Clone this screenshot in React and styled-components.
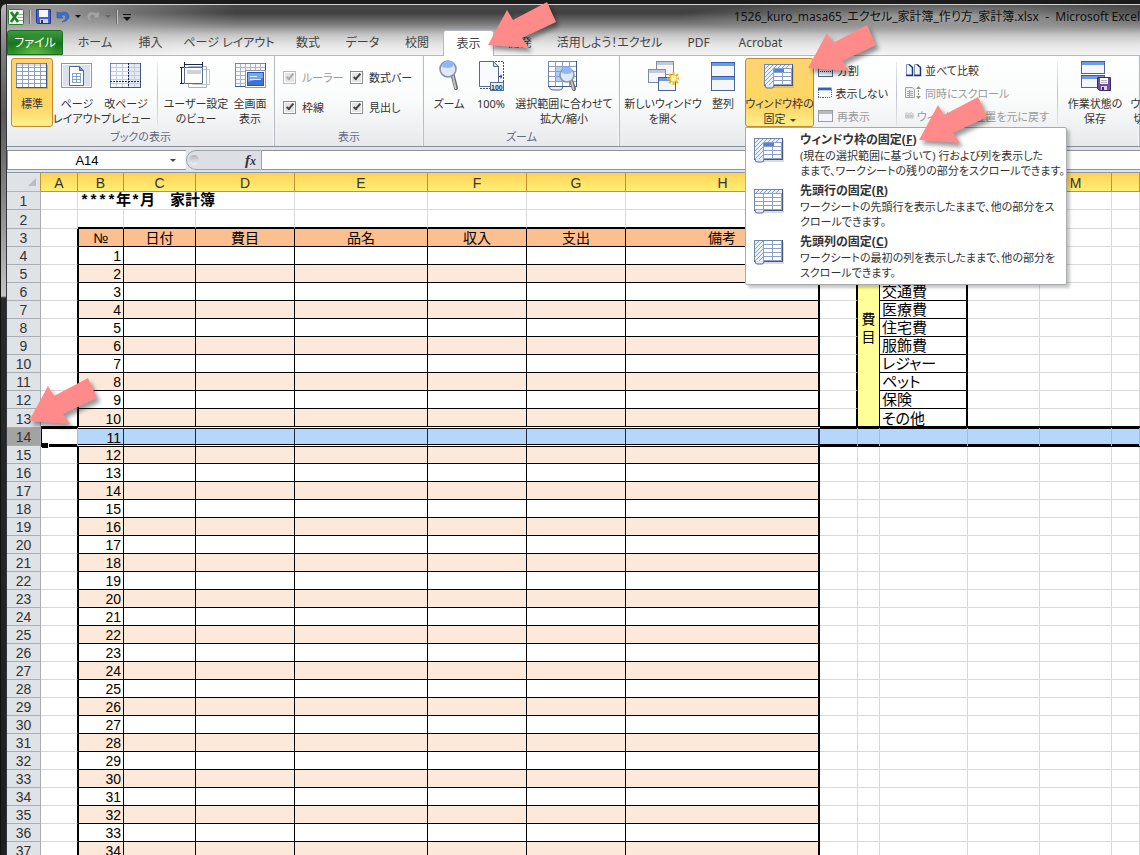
import React, { useState } from 'react';
import styled, { createGlobalStyle, css } from 'styled-components';

const GlobalStyle = createGlobalStyle`
  *, *::before, *::after {
    box-sizing: border-box;
  }
  body {
    margin: 0;
    font-family: 'Noto Sans', 'Noto Sans CJK JP', sans-serif;
    font-size: 12px;
    color: #333;
  }
  button, input {
    font: inherit;
    color: inherit;
  }
`;

/* ---------- window frame ---------- */

const Window = styled.div`
  position: relative;
  height: 100vh;
  display: flex;
  overflow: hidden;
  background: #1b1b1b;
  padding-top: 4px;
`;

const Frame = styled.div`
  flex: 0 0 7px;
  border-left: 1px solid #111;
  border-right: 1px solid #33373b;
  border-top-left-radius: 6px;
  background: linear-gradient(#b8b8b8 0, #7c7c7c 50px, #5a5a5a 110px, #8a8a8a 200px, #c4c4c4 292px, #262a2c 294px, #1d2022 100%);
`;

const Main = styled.div`
  flex: 1;
  min-width: 0;
  display: flex;
  flex-direction: column;
  border-top: 1px solid #d4d4d4;
  background: #fff;
`;

const Chrome = styled.header`
  flex: none;
  background:
    radial-gradient(ellipse 260px 16px at 930px 12px, rgba(190, 190, 190, 0.75), transparent),
    radial-gradient(ellipse 190px 60px at 40px 8px, rgba(200, 200, 200, 0.65), transparent),
    linear-gradient(#484848, #404040 8px, #7a7a7a 19px, #c6c6c6 30px, #e6e6e6 40px, #f4f4f4);
`;

const TitleBar = styled.div`
  display: flex;
  align-items: center;
  height: 23px;
  padding-left: 1px;
  color: #111;
`;

const QuickTools = styled.div`
  display: flex;
  align-items: center;
  gap: 5px;
`;

const QuickButton = styled.button`
  display: flex;
  padding: 0;
  border: 0;
  background: none;
`;

const Divider = styled.span`
  width: 2px;
  height: 14px;
  background: #6b6b6b;
  border-right: 1px solid #c4c4c4;
`;

const Title = styled.h1`
  margin: 0 0 0 auto;
  font-size: 12px;
  font-weight: 400;
  line-height: 20px;
  white-space: pre;
  font-feature-settings: 'palt';
`;

const Tabs = styled.nav`
  display: flex;
  align-items: flex-end;
  height: 27px;
  font-feature-settings: 'palt';
`;

const Tab = styled.button`
  width: ${(p) => p.$w}px;
  height: 25px;
  padding: 0;
  border: 1px solid transparent;
  border-bottom: 0;
  background: none;
  line-height: 24px;
  white-space: nowrap;
  color: #444;

  ${(p) => p.$active && css`
    position: relative;
    height: 26px;
    margin-bottom: -1px;
    background: #fff;
    border-color: #b4b8bd;
    border-radius: 3px 3px 0 0;
  `}
`;

const FileTab = styled(Tab)`
  margin-right: 2px;
  color: #fff;
  border: 1px solid #1e6b22;
  border-radius: 3px 3px 0 0;
  background: radial-gradient(ellipse at 50% 110%, #62c044, transparent 60%), linear-gradient(#3c9a3c, #17741d 55%, #2f962c);
`;

/* ---------- ribbon ---------- */

const Ribbon = styled.div`
  display: flex;
  flex: none;
  height: 92px;
  border-top: 1px solid #b4b8bd;
  border-bottom: 1px solid #8b9097;
  background: linear-gradient(#fff, #fafbfb 50%, #e7e9ec);
  font-size: 11px;
  font-feature-settings: 'palt';
`;

const Group = styled.section`
  flex: ${(p) => (p.$w ? `0 0 ${p.$w}px` : '1 0 0')};
  min-width: 0;
  display: flex;
  flex-direction: column;
  border-right: 1px solid #b9bdc3;
  box-shadow: inset -1px 0 #f6f7f8;
  padding-top: 2px;
`;

const GroupBody = styled.div`
  height: 69px;
  display: flex;
  gap: ${(p) => p.$gap}px;
  padding-left: ${(p) => p.$pad}px;
`;

const GroupLabel = styled.h2`
  margin: 0;
  font-size: 11px;
  font-weight: 400;
  line-height: 19px;
  text-align: center;
  color: #666a80;
`;

const Separator = styled.span`
  flex: 0 0 1px;
  margin: 4px 4px 2px;
  background: linear-gradient(#e8eaec, #bfc3c8 50%, #e2e4e7);
`;

const BigButton = styled.button`
  flex: 0 0 ${(p) => p.$w}px;
  min-width: 0;
  height: 69px;
  display: flex;
  flex-direction: column;
  align-items: center;
  padding: 1px 0 0;
  border: 1px solid transparent;
  border-radius: 3px;
  background: none;
  line-height: 15px;
  text-align: center;
  white-space: nowrap;

  svg {
    flex: none;
    margin-bottom: 4px;
  }

  ${(p) => p.$active && css`
    border-color: #c28a30;
    background: linear-gradient(#fdd374, #ffd666 45%, #ffd565 70%, #fff08a);
  `}
`;

const Caret = styled.span`
  display: inline-block;
  margin-left: ${(p) => (p.$flush ? 0 : 4)}px;
  vertical-align: middle;
  border: 3px solid transparent;
  border-top-color: ${(p) => p.$color || '#444'};
  border-bottom: 0;
`;

const SmallColumn = styled.div`
  flex: 0 0 ${(p) => p.$w}px;
  min-width: 0;
  display: flex;
  flex-direction: column;
`;

const SmallButton = styled.button`
  display: flex;
  align-items: center;
  gap: 3px;
  height: 23px;
  padding: 0;
  border: 0;
  background: none;
  white-space: nowrap;
  color: #333;

  &:disabled {
    color: #9a9a9a;
  }
`;

const CheckGrid = styled.div`
  display: grid;
  grid-template-columns: 67px 1fr;
  grid-auto-rows: 30px;
  align-items: center;
  height: 69px;
  padding: 4px 0 0 8px;
`;

const CheckLabel = styled.label`
  display: flex;
  align-items: center;
  gap: 6px;
  white-space: nowrap;
  color: ${(p) => (p.$off ? '#9a9a9a' : '#333')};
`;

const CheckBox = styled.input`
  appearance: none;
  width: 13px;
  height: 13px;
  margin: 0;
  border: 1px solid #8c8c8c;
  outline: 1px solid #fff;
  outline-offset: -2px;
  background: #e4e4e4;
  display: grid;
  place-items: center;

  &:checked::before {
    content: '';
    width: 4px;
    height: 8px;
    margin-bottom: 2px;
    border: solid #444;
    border-width: 0 2px 2px 0;
    rotate: 40deg;
  }
  &:disabled {
    border-color: #bbb;
  }
  &:disabled::before {
    border-color: #aaa;
  }
`;

/* ---------- freeze panes menu ---------- */

const MenuAnchor = styled.div`
  position: relative;
  flex: 0 0 69px;
  min-width: 0;
  display: flex;
`;

const Menu = styled.ul`
  position: absolute;
  z-index: 3;
  left: 0;
  top: 69px;
  width: 322px;
  margin: 0;
  padding: 2px 0 1px;
  list-style: none;
  background: #fff;
  border: 1px solid #a7abb0;
  border-radius: 0 2px 2px 2px;
  box-shadow: 3px 3px 3px rgba(0, 0, 0, 0.22);
`;

const MenuItem = styled.button`
  display: grid;
  grid-template-columns: 46px 1fr;
  align-items: start;
  width: 100%;
  height: 51px;
  padding: 1px 0 0 8px;
  border: 0;
  background: none;
  text-align: left;
  line-height: 15px;
  white-space: nowrap;

  svg {
    margin-top: 6px;
  }
`;

const MenuTitle = styled.strong`
  display: block;
  font-size: 12px;
  line-height: 17px;
`;

const MenuText = styled.span`
  font-size: 11px;
`;

/* ---------- formula bar ---------- */

const FormulaBar = styled.div`
  display: flex;
  flex: 0 0 26px;
  padding: 3px 0 2px;
  background: #dfe3ea;
  border-bottom: 1px solid #9097a0;
`;

const NameBox = styled.div`
  flex: 0 0 179px;
  display: flex;
  align-items: center;
  background: #fff;
  border: 1px solid #8f949b;
  border-right: 0;

  input {
    width: 158px;
    height: 17px;
    padding: 0;
    border: 0;
    background: none;
    text-align: center;
    font-family: 'Liberation Sans', sans-serif;
    font-size: 13px;
    color: #000;
  }
`;

const FxArea = styled.div`
  flex: 0 0 76px;
  display: flex;
  align-items: center;
  justify-content: space-between;
  padding: 0 5px 0 2px;
  border: 1px solid #9da2a9;
  border-radius: 10px 0 0 10px;
  background: #dcdfe4;
`;

const Knob = styled.span`
  width: 10px;
  height: 10px;
  border-radius: 50%;
  background: linear-gradient(#b0b3b8, #f4f4f4);
`;

const FxButton = styled.button`
  padding: 0;
  border: 0;
  background: none;
  font-family: 'Liberation Serif', serif;
  font-size: 15px;
  font-weight: 700;
  font-style: italic;
  line-height: 16px;

  small {
    font-size: 12px;
  }
`;

const FormulaInput = styled.input`
  flex: 1;
  min-width: 0;
  padding: 0 4px;
  border: 1px solid #8f949b;
  border-width: 1px 0;
  background: #fff;
`;

/* ---------- sheet ---------- */

const Sheet = styled.table`
  table-layout: fixed;
  width: 100%;
  border-collapse: separate;
  border-spacing: 0;
  font-family: 'Liberation Sans', 'Noto Sans CJK JP', sans-serif;
  font-size: 14px;
  line-height: 16px;
  color: #000;
`;

const ColHead = styled.th`
  height: 19px;
  padding: 2px 0 0;
  font-weight: 400;
  color: #333;
  background: linear-gradient(#ffd25a, #fff072);
  border-right: 1px solid #c98f35;
  border-bottom: 1px solid #c98f35;
`;

const Corner = styled.th`
  padding: 0 4px 0 0;
  background: #dfe3e8;
  border-right: 1px solid #c98f35;
  border-bottom: 1px solid #b0b5bc;

  &::after {
    content: '';
    display: block;
    width: 0;
    margin-left: auto;
    border: 4px solid #b9bdc2;
    border-top-color: transparent;
    border-left-color: transparent;
  }
`;

const RowHead = styled.th`
  height: ${(p) => p.$h}px;
  padding: 1px 0 0;
  font-weight: 400;
  color: #333;
  background: ${(p) => (p.$active ? '#a3a3a3' : '#dfe3e8')};
  border-right: 1px solid #a9adb3;
  border-bottom: 1px solid #a9adb3;
`;

const Cell = styled.td`
  padding: 1px 2px 0;
  white-space: nowrap;
  text-align: ${(p) => p.$align || 'left'};
  background: ${(p) => p.$fill || 'transparent'};
  border-style: solid;
  border-color: ${(p) => (p.$right ? '#000' : '#d9d9d9')} ${(p) => (p.$right ? '#000' : '#d9d9d9')} ${(p) => (p.$bottom ? '#000' : '#d9d9d9')} #000;
  border-width: 0 ${(p) => p.$right || 1}px ${(p) => p.$bottom || 1}px ${(p) => p.$left || 0}px;
`;

const TitleCell = styled(Cell)`
  padding-top: 2px;
  line-height: 15px;
  font-family: 'Liberation Mono', 'Noto Sans CJK JP', monospace;
  font-size: 15px;
  font-weight: 700;
`;

const KanaCell = styled(Cell)`
  font-size: 15px;
  font-feature-settings: 'palt';
`;

const VerticalCell = styled(Cell)`
  padding: 0;
  line-height: 18px;
`;

const SelectedCell = styled(Cell)`
  position: relative;
  box-shadow:
    inset 0 -1px ${(p) => p.$line},
    inset 0 -2px #000,
    0 1px #000,
    0 -1px ${(p) => p.$line},
    0 -2px #000,
    inset 0 1px #000;
  border-right-color: ${(p) => (p.$right ? '#1d2740' : '#9fbddd')};
  border-bottom: 0;
`;

const FillHandle = styled.span`
  position: absolute;
  left: 0;
  bottom: -2px;
  width: 7px;
  height: 6px;
  background: #000;
  border: solid #fff;
  border-width: 1px 1px 0 0;
`;

const Arrow = styled.svg`
  position: absolute;
  z-index: 5;
  left: ${(p) => p.$x}px;
  top: ${(p) => p.$y}px;
  overflow: visible;
  pointer-events: none;
  filter: drop-shadow(3px 4px 2px rgba(0, 0, 0, 0.4));
`;

/* ---------- icons ---------- */

const lines = (from, to, step) => {
  const out = [];
  for (let v = from; v <= to; v += step) out.push(v);
  return out;
};

const GridLines = ({ x, y, w, h, dx, dy, stroke = '#8aa0c4' }) => (
  <g fill="none" stroke={stroke} shapeRendering="crispEdges">
    {lines(x + dx, x + w - 2, dx).map((v) => <path key={`v${v}`} d={`M${v + 0.5} ${y}v${h}`} />)}
    {lines(y + dy, y + h - 2, dy).map((v) => <path key={`h${v}`} d={`M${x} ${v + 0.5}h${w}`} />)}
    <rect x={x + 0.5} y={y + 0.5} width={w - 1} height={h - 1} stroke="#6f86ad" />
    <path d={`M${x} ${y + h - 0.5}h${w - 0.5}V${y}`} stroke="#44597f" />
  </g>
);

const Icon = ({ children, size = 32, h }) => (
  <svg width={size} height={h || size} viewBox={`0 0 ${size} ${h || size}`} aria-hidden="true">{children}</svg>
);

const NormalIcon = () => (
  <Icon>
    <rect x="1" y="5" width="31" height="24" fill="#7a6a40" opacity=".35" />
    <rect x="0" y="3" width="31" height="25" fill="#fff" />
    <rect x="0" y="3" width="31" height="3" fill="#d5e1f3" />
    <GridLines x={0} y={3} w={31} h={25} dx={6} dy={4} />
  </Icon>
);

const PageLayoutIcon = () => (
  <Icon>
    <rect x=".5" y="3.5" width="30" height="24" fill="#d9e1ee" stroke="#8898b4" />
    <rect x="1.5" y="4.5" width="28" height="22" fill="none" stroke="#f5f8fc" />
    <path d="M8.500 6.500h10l4 4v15h-14z" fill="#fff" stroke="#54698f" />
    <path d="M18.500 6.500v4h4z" fill="#8497b8" stroke="#54698f" />
    <path d="M11 13.500h9M11 16.500h9M11 19.500h9M11 22.500h9M11.500 13v10M15.500 13v10M19.500 13v10" stroke="#8aa0c4" shapeRendering="crispEdges" />
  </Icon>
);

const PageBreakIcon = () => (
  <Icon>
    <rect x="0" y="3" width="31" height="25" fill="#f7f9fc" />
    <rect x="19" y="3" width="12" height="25" fill="#e4e9f0" />
    <GridLines x={0} y={3} w={31} h={25} dx={6} dy={4} stroke="#c3cde0" />
    <path d="M18.500 3v25M0 21.500h31" stroke="#1c2e50" strokeDasharray="2 1" shapeRendering="crispEdges" />
  </Icon>
);

const CustomViewIcon = () => (
  <Icon>
    <path d="M12.500 9.500h17v15h-17z" fill="#fff" stroke="#c3c9d3" />
    <path d="M8.500 6.500h18v21h-18z" fill="none" stroke="#a9b2c1" />
    <path d="M4.500 7.500h18v16h-18z" fill="#fff" stroke="#5a6a8a" />
    <rect x="7" y="10" width="14" height="4" fill="#cdd3de" />
    <path d="M4.500 2v5M22.500 2v5M4 4.500h19M0 7.500h4M0 23.500h4M1.500 8v15" stroke="#16274d" shapeRendering="crispEdges" />
  </Icon>
);

const FullScreenIcon = () => (
  <Icon>
    <rect x="1" y="3" width="31" height="24" fill="#f7f9fc" />
    <GridLines x={1} y={3} w={31} h={24} dx={5} dy={4} stroke="#a9b7d0" />
    <rect x="11.500" y="10.500" width="20" height="17" fill="#fff" stroke="#8a9ab8" />
    <rect x="13.500" y="12.500" width="16" height="13" fill="#3b74d6" stroke="#2b57a8" />
    <path d="M14 13h15v5l-15 4z" fill="#7ba5ea" />
    <path d="M16 16.500h7M16 19.500h11" stroke="#e6effc" />
  </Icon>
);

const Lens = ({ cx, cy, r, hx, hy }) => (
  <g>
    <path d={`M${cx + r * 0.6} ${cy + r * 0.8}L${hx} ${hy}`} stroke="#666" strokeWidth="4" strokeLinecap="round" />
    <path d={`M${cx + r * 0.6} ${cy + r * 0.8}L${hx - 0.5} ${hy}`} stroke="#c4c4c4" strokeWidth="2" strokeLinecap="round" />
    <circle cx={cx} cy={cy} r={r} fill="#dbe9fb" stroke="#8a94a6" strokeWidth="1.600" />
    <path d={`M${cx - r + 2} ${cy - 2}a${r - 1.5} ${r - 1.500} 0 0 1 ${r * 1.5} ${-r * 0.4}q-1 ${r * 0.8} ${-r * 1.500} ${r * 0.4}z`} fill="#8fb8f2" />
  </g>
);

const ZoomIcon = () => (
  <Icon><Lens cx={15} cy={9} r={8} hx={23} hy={28} /></Icon>
);

const Zoom100Icon = () => (
  <Icon>
    <path d="M20 1.500h8.500v27H4" fill="none" stroke="#3c4f78" strokeDasharray="2 1" shapeRendering="crispEdges" />
    <path d="M4.500 1.500h14l5 5v20h-19z" fill="#f8fafd" stroke="#54698f" />
    <path d="M18.500 1.500v5h5z" fill="#d6dfee" stroke="#54698f" />
    <path d="M24 16.500h3M26 14.500v4" stroke="#26375c" />
    <rect x="15.500" y="22.500" width="13" height="8" fill="#e8eef7" stroke="#54698f" />
    <text x="16" y="29.500" fontSize="7" fontWeight="700" fontFamily="Liberation Sans, sans-serif" fill="#1c2e50">100</text>
  </Icon>
);

const ZoomFitIcon = () => (
  <Icon>
    <rect x="0" y="1" width="29" height="26" fill="#fff" />
    <rect x="7" y="6" width="14" height="15" fill="#b4cdf3" />
    <GridLines x={0} y={1} w={29} h={26} dx={7} dy={5} />
    <path d="M1 27q1 3 4 3h7q2 0 3-3" fill="#eef2f8" stroke="#54698f" />
    <Lens cx={19} cy={15} r={7} hx={26} hy={29} />
  </Icon>
);

const Win = ({ x, y, w, h, bar = '#6f9ae6', stroke = '#4f6490' }) => (
  <g shapeRendering="crispEdges">
    <rect x={x + 0.5} y={y + 0.5} width={w - 1} height={h - 1} fill="#f3f6fb" stroke={stroke} />
    <rect x={x + 1} y={y + 1} width={w - 2} height="3" fill={bar} />
    <path d={`M${x} ${y + 0.5}h${w}`} stroke={bar === '#6f9ae6' ? '#2f5db5' : stroke} />
  </g>
);

const NewWindowIcon = () => (
  <Icon>
    <Win x={9} y={1} w={18} h={14} bar="#c3cad6" stroke="#7e8ba3" />
    <Win x={1} y={9} w={18} h={14} bar="#c3cad6" stroke="#7e8ba3" />
    <Win x={11} y={17} w={18} h={14} />
    <path d="M26.500 12v13M20 18.500h13M22 14l9 9M31 14l-9 9" stroke="#f2b418" strokeWidth="2" />
    <circle cx="26.500" cy="18.500" r="3" fill="#fff4a3" />
  </Icon>
);

const ArrangeIcon = () => (
  <Icon>
    <Win x={4} y={2} w={24} h={15} />
    <Win x={4} y={16} w={24} h={15} />
  </Icon>
);

const Hatch = ({ x, y, w, h }) => (
  <g>
    <rect x={x} y={y} width={w} height={h} fill="#eaf1fd" />
    {lines(0, w + h - 4, 4).map((d) => {
      const x1 = x + Math.min(d, w);
      const y1 = y + Math.max(0, d - w);
      const x2 = x + Math.max(0, d - h);
      const y2 = y + Math.min(d, h);
      return <path key={d} d={`M${x1} ${y1}L${x2} ${y2}`} stroke="#7ea2de" />;
    })}
  </g>
);

const FreezeIcon = ({ mode = 'both' }) => (
  <Icon size={30} h={27}>
    <rect x="2" y="3" width="28" height="22" fill="#8a8a8a" opacity=".3" />
    <rect x="0" y="1" width="29" height="22" fill="#fff" />
    <GridLines x={0} y={1} w={29} h={22} dx={9} dy={4} />
    {mode !== 'col' && <Hatch x={1} y={2} w={27} h={3} />}
    {mode !== 'row' && <Hatch x={1} y={2} w={8} h={20} />}
    {mode === 'both' && <rect x="10" y="6" width="10" height="3" fill="#4f83dc" />}
    <path d="M1 22q0 3 2 3h5q2 0 2-3" fill="#dfe8f7" stroke="#54698f" />
  </Icon>
);

const SplitIcon = () => (
  <Icon size={16}>
    <Win x={0} y={1} w={15} h={14} />
    <path d="M2 9.500h12" stroke="#26375c" strokeDasharray="1 1" />
  </Icon>
);

const HideIcon = () => (
  <Icon size={16}>
    <rect x="0" y="2" width="15" height="3" fill="#2f62c0" />
    <path d="M.5 5v8.500h14V5" fill="none" stroke="#3f4a60" strokeDasharray="1 1" shapeRendering="crispEdges" />
  </Icon>
);

const UnhideIcon = () => (
  <Icon size={16}>
    <Win x={0} y={2} w={15} h={12} bar="#b9b9b9" stroke="#9d9d9d" />
  </Icon>
);

const SideBySideIcon = () => (
  <Icon size={17}>
    <path d="M1.500 3.500h3l3 2.500v8h-6zM9.500 3.500h3l3 2.500v8h-6z" fill="#f3f7fd" stroke="#7f95ba" />
    <path d="M4 3.500l3.500 3v8H1M12 3.500l3.500 3v8H9" fill="none" stroke="#1f3766" strokeWidth="1.500" />
  </Icon>
);

const SyncIcon = () => (
  <Icon size={17}>
    <path d="M.5 3.500h7l2 2v8H.5z" fill="#eee" stroke="#a0a0a0" />
    <path d="M2 7.500h6M2 9.500h6M2 11.500h6M4.500 6v7" stroke="#a8a8a8" />
    <path d="M13.500 3v11" stroke="#8f8f8f" strokeDasharray="2 1" />
    <path d="M11 5l2.500-3L16 5zM11 12l2.500 3 2.500-3z" fill="#8f8f8f" />
  </Icon>
);

const ResetIcon = () => (
  <Icon size={17}>
    <path d="M1.500 3.500h4l2 2v8h-6zM9.500 3.500h4l2 2v8h-6z" fill="#eee" stroke="#a0a0a0" />
    <path d="M1 9.500h5M4 7l2.500 2.500L4 12M16 9.500h-5M13 7l-2.500 2.500L13 12" fill="none" stroke="#8c8c8c" />
  </Icon>
);

const SaveStateIcon = () => (
  <Icon>
    <Win x={2} y={1} w={24} h={13} />
    <Win x={2} y={15} w={24} h={13} />
    <path d="M18.500 17.500h13v13h-11l-2-2z" fill="#6c4f9e" stroke="#3f2a6b" />
    <rect x="21" y="18" width="8" height="6" fill="#fff" />
    <path d="M22 20.500h6M22 22.500h6" stroke="#b9b0cc" />
    <rect x="22" y="26" width="6" height="4" fill="#d8d0e8" />
    <rect x="23" y="27" width="2" height="3" fill="#3f2a6b" />
  </Icon>
);

const ExcelIcon = () => (
  <Icon size={16}>
    <rect x=".5" y=".5" width="15" height="15" rx="1" fill="#e9f5e6" stroke="#2f7d32" />
    <rect x="10" y="2" width="5" height="12" fill="#fff" />
    <path d="M10 5.500h5M10 8.500h5M10 11.500h5" stroke="#7bb87b" />
    <path d="M3 3l7 10M10 3L3 13" stroke="#1f7a2a" strokeWidth="2.600" />
  </Icon>
);

const DiskIcon = () => (
  <Icon size={15}>
    <path d="M.5.5h14v14h-13l-1-1z" fill="#4a5fc8" stroke="#26338a" />
    <rect x="3" y="1" width="9" height="7" fill="#f3f6fd" />
    <rect x="4" y="10" width="8" height="4" fill="#c9d2ee" />
    <rect x="5" y="11" width="2" height="3" fill="#26338a" />
  </Icon>
);

const UndoIcon = () => (
  <Icon size={14}>
    <path d="M1 2v6h6L5 6q4-3 5 1 0 3-4 5 7-1 7-6-2-6-9-3z" fill="#3d6fd0" stroke="#2a54a8" strokeWidth=".6" />
  </Icon>
);

const RedoIcon = () => (
  <Icon size={14}>
    <path d="M13 2v6H7l2-2Q5 3 4 7q0 3 4 5-7-1-7-6 2-6 9-3z" fill="#a5a5a5" stroke="#8b8b8b" strokeWidth=".6" />
  </Icon>
);

const CustomizeIcon = () => (
  <Icon size={8}>
    <path d="M0 1.500h8" stroke="#111" />
    <path d="M0 4h8L4 8z" fill="#111" />
  </Icon>
);

/* ---------- data ---------- */

const TABS = [
  ['ホーム', 60],
  ['挿入', 51],
  ['ページ レイアウト', 106],
  ['数式', 52],
  ['データ', 57],
  ['校閲', 52],
  ['表示', 51],
  ['開発', 52],
  ['活用しよう！エクセル', 127],
  ['PDF', 51],
  ['Acrobat', 73],
];

const COLUMNS = [
  ['A', 37], ['B', 46], ['C', 72], ['D', 99], ['E', 133], ['F', 99], ['G', 99],
  ['H', 194], ['I', 38], ['J', 22], ['K', 88], ['L', 72], ['M', 72], ['N'],
];

const HEADINGS = { B: '№', C: '日付', D: '費目', E: '品名', F: '収入', G: '支出', H: '備考' };

const EXPENSES = ['', '', '', '交通費', '医療費', '住宅費', '服飾費', 'レジャー', 'ペット', '保険', 'その他'];

const ROWS = Array.from({ length: 37 }, (_, i) => i + 1);

const MENU = [
  { mode: 'both', title: 'ウィンドウ枠の固定', key: 'F', text: ['(現在の選択範囲に基づいて) 行および列を表示した', 'ままで、ワークシートの残りの部分をスクロールできます。'] },
  { mode: 'row', title: '先頭行の固定', key: 'R', text: ['ワークシートの先頭行を表示したままで、他の部分をス', 'クロールできます。'] },
  { mode: 'col', title: '先頭列の固定', key: 'C', text: ['ワークシートの最初の列を表示したままで、他の部分を', 'スクロールできます。'] },
];

const ARROWS = [[488, 45], [808, 68], [919, 140], [29, 421]];

const rowHeight = (row) => (row === 2 || row === 13 ? 19 : 18);

const SELECTED = 14;

const SheetCell = ({ row, col }) => {
  const inLedger = col >= 'B' && col <= 'H';
  const ledgerRow = inLedger && row >= 3;
  const listRow = row >= 3 && row < SELECTED;

  if (row === SELECTED) {
    return (
      <SelectedCell
        $fill={col === 'A' ? '#fff' : '#b5d7fc'}
        $line={inLedger ? '#fff' : '#000'}
        $left={col === 'A' ? 1 : 0}
        $right={inLedger ? (col === 'H' ? 2 : 1) : undefined}
        $align="right"
      >
        {col === 'B' && row - 3}
        {col === 'A' && <FillHandle />}
      </SelectedCell>
    );
  }
  if (row === 2) return <Cell $bottom={inLedger ? 2 : undefined} />;
  if (ledgerRow) {
    const heading = row === 3;
    const fill = heading ? '#fcbf90' : row % 2 ? '#fde9da' : undefined;
    return (
      <Cell
        $fill={fill}
        $left={col === 'B' ? 1 : 0}
        $right={col === 'H' ? 2 : 1}
        $bottom={1}
        $align={heading ? 'center' : 'right'}
      >
        {heading ? HEADINGS[col] : col === 'B' && row - 3}
      </Cell>
    );
  }
  if (col === 'A' && row >= 3) return <Cell $right={1} />;
  if (col === 'I' && listRow) return <Cell $right={2} />;
  if (col === 'J' && listRow) {
    return row === 3 ? (
      <VerticalCell rowSpan={11} $fill="#ffff99" $right={1} $align="center">費<br />目</VerticalCell>
    ) : null;
  }
  if (col === 'K' && listRow) return <KanaCell $right={2} $bottom={1}>{EXPENSES[row - 3]}</KanaCell>;
  return <Cell />;
};

const App = () => {
  const [name, setName] = useState('A14');
  const [formula, setFormula] = useState('');
  const [tab, setTab] = useState('表示');

  return (
    <Window>
      <GlobalStyle />
      <Frame />
      <Main>
        <Chrome>
          <TitleBar>
            <QuickTools>
              <ExcelIcon />
              <Divider />
              <QuickButton aria-label="上書き保存"><DiskIcon /></QuickButton>
              <QuickButton aria-label="元に戻す"><UndoIcon /></QuickButton>
              <Caret $color="#111" $flush />
              <QuickButton aria-label="やり直し"><RedoIcon /></QuickButton>
              <Caret $color="#666" $flush />
              <Divider />
              <QuickButton aria-label="カスタマイズ"><CustomizeIcon /></QuickButton>
            </QuickTools>
            <Title>1526_kuro_masa65_エクセル_家計簿_作り方_家計簿.xlsx  -  Microsoft Excel</Title>
          </TitleBar>
          <Tabs>
            <FileTab $w={56}>ファイル</FileTab>
            {TABS.map(([label, w]) => (
              <Tab key={label} $w={w} $active={tab === label} onClick={() => setTab(label)}>{label}</Tab>
            ))}
          </Tabs>
        </Chrome>

        <Ribbon>
          <Group $w={268}>
            <GroupBody $pad={4} $gap={2}>
              <BigButton $w={42} $active><NormalIcon />標準</BigButton>
              <BigButton $w={44}><PageLayoutIcon />ページ<br />レイアウト</BigButton>
              <BigButton $w={50}><PageBreakIcon />改ページ<br />プレビュー</BigButton>
              <Separator />
              <BigButton $w={64}><CustomViewIcon />ユーザー設定<br />のビュー</BigButton>
              <BigButton $w={40}><FullScreenIcon />全画面<br />表示</BigButton>
            </GroupBody>
            <GroupLabel>ブックの表示</GroupLabel>
          </Group>

          <Group $w={149}>
            <CheckGrid>
              <CheckLabel $off><CheckBox type="checkbox" defaultChecked disabled />ルーラー</CheckLabel>
              <CheckLabel><CheckBox type="checkbox" defaultChecked />数式バー</CheckLabel>
              <CheckLabel><CheckBox type="checkbox" defaultChecked />枠線</CheckLabel>
              <CheckLabel><CheckBox type="checkbox" defaultChecked />見出し</CheckLabel>
            </CheckGrid>
            <GroupLabel>表示</GroupLabel>
          </Group>

          <Group $w={196}>
            <GroupBody $pad={6} $gap={2}>
              <BigButton $w={38}><ZoomIcon />ズーム</BigButton>
              <BigButton $w={42}><Zoom100Icon />100%</BigButton>
              <BigButton $w={100}><ZoomFitIcon />選択範囲に合わせて<br />拡大/縮小</BigButton>
            </GroupBody>
            <GroupLabel>ズーム</GroupLabel>
          </Group>

          <Group>
            <GroupBody $pad={5} $gap={4}>
              <BigButton $w={76}><NewWindowIcon />新しいウィンドウ<br />を開く</BigButton>
              <BigButton $w={36}><ArrangeIcon />整列</BigButton>
              <MenuAnchor>
                <BigButton $w={69} $active aria-haspopup="menu" aria-expanded="true">
                  <Icon><g transform="translate(0 3)"><FreezeIcon /></g></Icon>
                  ウィンドウ枠の
                  <span>固定<Caret /></span>
                </BigButton>
                <Menu>
                  {MENU.map((item) => (
                    <li key={item.key}>
                      <MenuItem>
                        <FreezeIcon mode={item.mode} />
                        <span>
                          <MenuTitle>{item.title}(<u>{item.key}</u>)</MenuTitle>
                          <MenuText>{item.text[0]}<br />{item.text[1]}</MenuText>
                        </span>
                      </MenuItem>
                    </li>
                  ))}
                </Menu>
              </MenuAnchor>
              <SmallColumn $w={70}>
                <SmallButton><SplitIcon />分割</SmallButton>
                <SmallButton><HideIcon />表示しない</SmallButton>
                <SmallButton disabled><UnhideIcon />再表示</SmallButton>
              </SmallColumn>
              <Separator />
              <SmallColumn $w={144}>
                <SmallButton><SideBySideIcon />並べて比較</SmallButton>
                <SmallButton disabled><SyncIcon />同時にスクロール</SmallButton>
                <SmallButton disabled><ResetIcon />ウィンドウの位置を元に戻す</SmallButton>
              </SmallColumn>
              <Separator />
              <BigButton $w={58}><SaveStateIcon />作業状態の<br />保存</BigButton>
              <BigButton $w={62}>
                <ArrangeIcon />
                ウィンドウの
                <span>切り替え<Caret /></span>
              </BigButton>
            </GroupBody>
          </Group>
        </Ribbon>

        <FormulaBar>
          <NameBox>
            <input aria-label="名前ボックス" value={name} onChange={(e) => setName(e.target.value)} />
            <Caret />
          </NameBox>
          <FxArea>
            <Knob />
            <FxButton aria-label="関数の挿入">f<small>x</small></FxButton>
          </FxArea>
          <FormulaInput aria-label="数式バー" value={formula} onChange={(e) => setFormula(e.target.value)} />
        </FormulaBar>

        <Sheet>
          <colgroup>
            <col width="34" />
            {COLUMNS.map(([col, w]) => <col key={col} width={w} />)}
          </colgroup>
          <thead>
            <tr>
              <Corner aria-label="すべて選択" />
              {COLUMNS.map(([col]) => <ColHead key={col} scope="col">{col !== 'N' && col}</ColHead>)}
            </tr>
          </thead>
          <tbody>
            {ROWS.map((row) => (
              <tr key={row}>
                <RowHead scope="row" $h={rowHeight(row)} $active={row === SELECTED}>{row}</RowHead>
                {row === 1 ? (
                  <>
                    <Cell />
                    <TitleCell colSpan={3}>****年*月　家計簿</TitleCell>
                    {COLUMNS.slice(4).map(([col]) => <Cell key={col} />)}
                  </>
                ) : (
                  COLUMNS.map(([col]) => <SheetCell key={col} row={row} col={col} />)
                )}
              </tr>
            ))}
          </tbody>
        </Sheet>
      </Main>

      {ARROWS.map(([x, y]) => (
        <Arrow key={x} $x={x} $y={y - 43} width="68" height="46" viewBox="0 -43 68 46" aria-hidden="true">
          <path d="M0 0L19-35 25-25 59-43 68-23 34-7 41 3z" fill="#ff8a8a" />
        </Arrow>
      ))}
    </Window>
  );
};

export default App;
